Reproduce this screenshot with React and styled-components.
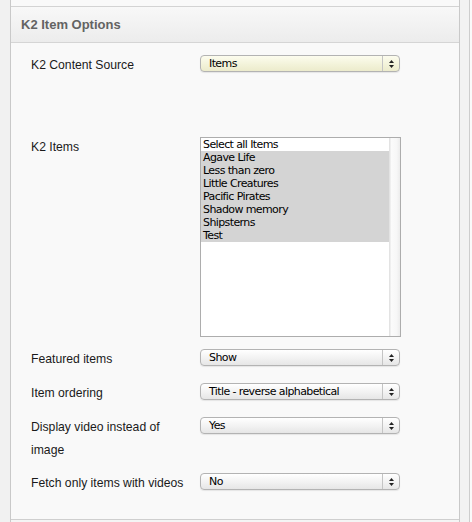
import React from "react";
import styled, { createGlobalStyle } from "styled-components";

const Global = createGlobalStyle`
  html, body { margin: 0; padding: 0; }
  body {
    background: #f1f1f1;
    font-family: "Liberation Sans", Arial, sans-serif;
    overflow: hidden;
  }
`;

const Page = styled.div`
  display: flex;
  height: 522px;
  padding-left: 10px;
`;

const Column = styled.div`
  width: 448px;
  display: flex;
  flex-direction: column;
  background: #f9f9f9;
  border-left: 1px solid #c9c9c9;
  border-right: 1px solid #c9c9c9;
`;

const Gutter = styled.div`
  width: 9px;
  background: #f2f2f2;
  border-right: 1px solid #cdcdcd;
`;

const Edge = styled.div`
  flex: 1;
  background: #fafafa;
`;

const PrevTail = styled.div`
  height: 6px;
  background: #f9f9f9;
`;

const Panel = styled.section`
  border-top: 1px solid #d3d3d3;
  border-bottom: 1px solid #cfcfcf;
`;

const Header = styled.h3`
  margin: 0;
  height: 35px;
  line-height: 35px;
  padding-left: 10px;
  font-size: 13px;
  font-weight: bold;
  color: #636363;
  background: linear-gradient(#f8f8f8, #ececec);
  border-bottom: 1px solid #d5d5d5;
`;

const Body = styled.div`
  padding: 6px 0 18px;
  background: #f9f9f9;
`;

const Row = styled.div`
  display: flex;
  align-items: flex-start;
  min-height: 34px;
  box-sizing: border-box;
  padding: 5px 0 5px 20px;
  margin-bottom: ${(p) => p.$after || 0}px;
`;

const Label = styled.label`
  width: 158px;
  margin-right: 11px;
  font-size: 12.2px;
  line-height: 23px;
  color: #1a1a1a;
`;

const SelectBox = styled.div`
  margin-top: 1px;
  width: 200px;
  height: 17px;
  box-sizing: border-box;
  display: flex;
  border: 1px solid #b3b3b3;
  border-radius: 4px;
  background: ${(p) =>
    p.$active
      ? "linear-gradient(#fcfcee, #f3f3da 55%, #ecebcc)"
      : "linear-gradient(#ffffff, #f3f3f3 50%, #e6e6e6)"};
  box-shadow: 0 1px 1px rgba(0, 0, 0, 0.08);
  overflow: hidden;
`;

const Value = styled.span`
  flex: 1;
  padding-left: 8px;
  font-family: "DejaVu Sans", sans-serif;
  font-size: 11px;
  letter-spacing: -0.6px;
  line-height: 15px;
  color: #000;
  white-space: nowrap;
`;

const Arrows = styled.span`
  width: 16px;
  border-left: 1px solid #c4c4c4;
  display: flex;
  align-items: center;
  justify-content: center;
`;

const ListBox = styled.div`
  margin: 1px 0;
  width: 201px;
  height: 200px;
  box-sizing: border-box;
  border: 1px solid #adadad;
  background: #fff;
  display: flex;
`;

const Options = styled.ul`
  flex: 1;
  margin: 0;
  padding: 0;
  list-style: none;
`;

const Option = styled.li`
  height: 13px;
  line-height: 13px;
  padding-left: 2px;
  font-family: "DejaVu Sans", sans-serif;
  font-size: 11px;
  letter-spacing: -0.6px;
  color: #000;
  background: ${(p) => (p.$selected ? "#d4d4d4" : "transparent")};
  white-space: nowrap;
`;

const Track = styled.div`
  width: 11px;
  background: linear-gradient(to right, #e3e3e3 0, #e3e3e3 1px, #fbfbfb 2px, #f7f7f7 70%, #ececec);
`;

const NextTail = styled.div`
  flex: 1;
  background: #f4f4f4;
`;

const ArrowIcon = () => (
  <svg width="5" height="8" viewBox="0 0 5 8">
    <path d="M2.5 0 L5 3 L0 3 Z" fill="#222" />
    <path d="M0 5 L5 5 L2.5 8 Z" fill="#222" />
  </svg>
);

const Select = ({ value, active }) => (
  <SelectBox $active={active}>
    <Value>{value}</Value>
    <Arrows>
      <ArrowIcon />
    </Arrows>
  </SelectBox>
);

const items = [
  "Agave Life",
  "Less than zero",
  "Little Creatures",
  "Pacific Pirates",
  "Shadow memory",
  "Shipsterns",
  "Test",
];

export default function App() {
  return (
    <>
      <Global />
      <Page>
        <Column>
          <PrevTail />
          <Panel>
            <Header>K2 Item Options</Header>
            <Body>
              <Row $after={48}>
                <Label>K2 Content Source</Label>
                <Select value="Items" active />
              </Row>
              <Row>
                <Label>K2 Items</Label>
                <ListBox>
                  <Options>
                    <Option>Select all Items</Option>
                    {items.map((it) => (
                      <Option key={it} $selected>
                        {it}
                      </Option>
                    ))}
                  </Options>
                  <Track />
                </ListBox>
              </Row>
              <Row>
                <Label>Featured items</Label>
                <Select value="Show" />
              </Row>
              <Row>
                <Label>Item ordering</Label>
                <Select value="Title - reverse alphabetical" />
              </Row>
              <Row>
                <Label>Display video instead of image</Label>
                <Select value="Yes" />
              </Row>
              <Row>
                <Label>Fetch only items with videos</Label>
                <Select value="No" />
              </Row>
            </Body>
          </Panel>
          <NextTail />
        </Column>
        <Gutter />
        <Edge />
      </Page>
    </>
  );
}
